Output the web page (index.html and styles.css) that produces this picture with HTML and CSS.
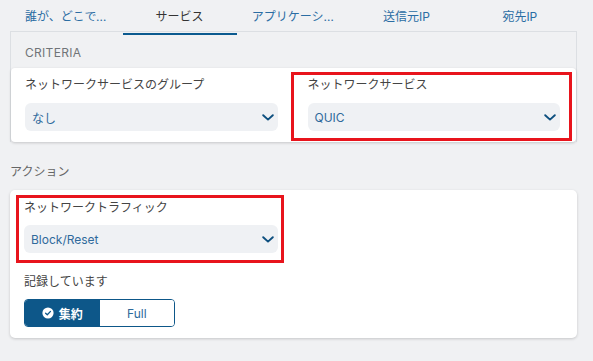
FILE: index.html
```html
<!doctype html>
<html>
   <head>
      <title>ルール - サービス</title>
      <link rel="stylesheet" href="styles.css">
   </head>
   <body>
      <nav class="tabs">
         <a class="tab" title="誰が、どこで、いつ">誰が、どこで、いつ</a>
         <a class="tab active">サービス</a>
         <a class="tab" title="アプリケーション">アプリケーション</a>
         <a class="tab">送信元IP</a>
         <a class="tab">宛先IP</a>
      </nav>

      <section class="panel">
         <h2 class="panel-title">CRITERIA</h2>
         <div class="card grid">
            <div class="field">
               <label class="field-label">ネットワークサービスのグループ</label>
               <div class="select">
                  <span>なし</span>
                  <svg class="chevron" viewBox="0 0 12 7"><path d="M1.2 1.2 6 5.6 10.8 1.2" /></svg>
               </div>
            </div>
            <div class="field mark mark-wide">
               <label class="field-label">ネットワークサービス</label>
               <div class="select">
                  <span>QUIC</span>
                  <svg class="chevron" viewBox="0 0 12 7"><path d="M1.2 1.2 6 5.6 10.8 1.2" /></svg>
               </div>
            </div>
         </div>
      </section>

      <h2 class="section-title">アクション</h2>
      <div class="card">
         <div class="grid">
            <div class="field mark mark-tight">
               <label class="field-label">ネットワークトラフィック</label>
               <div class="select">
                  <span>Block/Reset</span>
                  <svg class="chevron" viewBox="0 0 12 7"><path d="M1.2 1.2 6 5.6 10.8 1.2" /></svg>
               </div>
            </div>
         </div>
         <label class="field-label log-label">記録しています</label>
         <div class="toggle">
            <button class="toggle-btn on">
               <svg class="check" viewBox="0 0 12 12"><circle cx="6" cy="6" r="5.6" /><path d="M3.6 6.2 5.3 7.8 8.5 4.4" /></svg>
               集約
            </button>
            <button class="toggle-btn">Full</button>
         </div>
      </div>
   </body>
</html>
```

FILE: styles.css
```css
* {
   margin: 0;
   padding: 0;
   box-sizing: border-box;
}

body {
   font-family: Inter, "Noto Sans CJK JP", sans-serif;
   font-size: 12px;
   background: #f0f1f3;
   color: #444;
   width: 593px;
   height: 361px;
   overflow: hidden;
}

/* Tabs */
.tabs {
   display: flex;
   margin-left: 10px;
   width: 567px;
}

.tab {
   flex: 1;
   min-width: 0;
   height: 35px;
   line-height: 33px;
   padding: 0 16px 0 15px;
   text-align: center;
   color: #2b6da3;
   white-space: nowrap;
   overflow: hidden;
   text-overflow: ellipsis;
   border-bottom: 2px solid transparent;
   cursor: pointer;
}

.tab.active {
   color: #333;
   border-bottom-color: #0b5a8f;
}

/* Criteria panel */
.panel {
   margin: -4px 0 0 10px;
   width: 567px;
   border: 1px solid #dcdfe3;
   border-bottom: none;
}

.panel-title {
   font-size: 12px;
   font-weight: 400;
   color: #707478;
   line-height: 18px;
   padding: 12px 14px 6px;
   letter-spacing: 0.3px;
}

.card {
   background: #ffffff;
   border-radius: 5px;
   box-shadow: 0 1px 3px rgba(0, 0, 0, 0.18);
   padding: 8px 16px 11px 14px;
}

.panel .card {
   border-radius: 4px;
}

.grid {
   display: grid;
   grid-template-columns: 1fr 1fr;
   column-gap: 30px;
}

.field {
   position: relative;
}

.field-label {
   display: block;
   line-height: 18px;
   color: #444;
   margin-bottom: 9px;
}

.select {
   display: flex;
   align-items: center;
   justify-content: space-between;
   height: 28px;
   padding: 0 4px 0 7px;
   background: #eff1f4;
   border-radius: 6px;
   color: #2f6a9c;
}

.chevron {
   width: 12px;
   height: 7px;
   fill: none;
   stroke: #0d4f7f;
   stroke-width: 1.9;
   stroke-linecap: round;
   stroke-linejoin: round;
}

/* Red highlight boxes */
.mark::after {
   content: "";
   position: absolute;
   border: 3px solid #e8141c;
   pointer-events: none;
}

.mark-wide::after {
   top: -4px;
   bottom: -10px;
   left: -17px;
   right: -12px;
}

.mark-tight::after {
   top: -4px;
   bottom: -10px;
   left: -8px;
   right: -6px;
}

/* Action section */
.section-title {
   font-size: 12px;
   font-weight: 400;
   color: #666;
   line-height: 18px;
   padding: 21px 10px 9px;
}

body > .card {
   margin-left: 10px;
   width: 567px;
   padding-top: 9px;
}

body > .card .field-label {
   margin-bottom: 8px;
}

.log-label {
   margin-top: 20px;
}

.toggle {
   display: flex;
   width: 151px;
   height: 28px;
   border: 1px solid #0d5789;
   border-radius: 4px;
   overflow: hidden;
}

.toggle-btn {
   flex: 1;
   display: flex;
   align-items: center;
   justify-content: center;
   gap: 5px;
   border: none;
   background: #ffffff;
   color: #2d6a9a;
   font-family: inherit;
   font-size: 12px;
   cursor: pointer;
}

.toggle-btn.on {
   background: #0d5789;
   color: #ffffff;
   font-weight: 700;
}

.check {
   width: 12px;
   height: 12px;
}

.check circle {
   fill: #ffffff;
}

.check path {
   fill: none;
   stroke: #0d5789;
   stroke-width: 1.3;
   stroke-linecap: round;
   stroke-linejoin: round;
}
```
